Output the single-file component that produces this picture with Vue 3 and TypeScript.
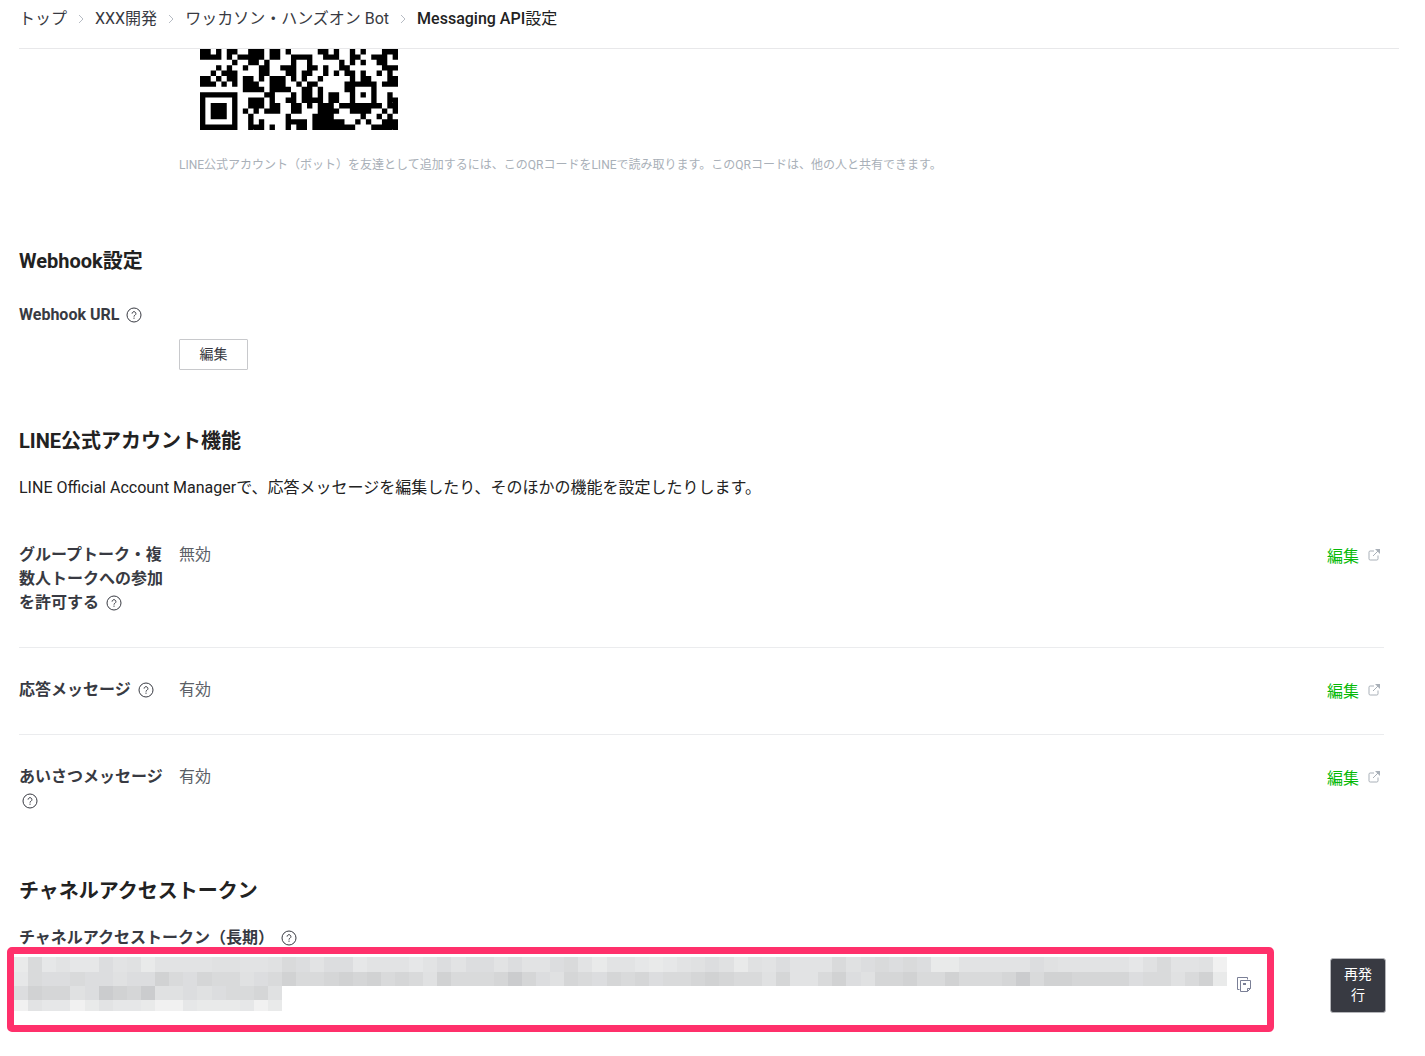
<script setup lang="ts">
import { defineComponent, h } from 'vue'

interface Feature {
  label: string
  value: string
}

const features: Feature[] = [
  { label: 'グループトーク・複数人トークへの参加を許可する', value: '無効' },
  { label: '応答メッセージ', value: '有効' },
  { label: 'あいさつメッセージ', value: '有効' },
]

const HelpIcon = defineComponent({
  render: () =>
    h('svg', { viewBox: '0 0 16 16', width: 16, height: 16, fill: 'none', stroke: '#383a42', role: 'img', 'aria-label': 'ヘルプ' }, [
      h('circle', { cx: 8, cy: 8, r: 7 }),
      h('path', { d: 'M6.1 6.6a1.9 1.9 0 1 1 2.9 1.6c-.7.4-1 .7-1 1.4' }),
      h('path', { d: 'M8 10.6v1.2' }),
    ]),
})

// Dark modules of each visible QR row, as column numbers
const qrRows: number[][] = [
  [0, 1, 3, 5, 6, 9, 10, 11, 13, 14, 16, 22, 23, 25, 28, 30, 34, 35, 36],
  [0, 1, 2, 3, 5, 7, 8, 9, 10, 11, 13, 14, 17, 18, 19, 20, 23, 24, 25, 28, 29, 32, 33, 34, 36],
  [6, 9, 10, 12, 17, 20, 26, 28, 30, 33, 34],
  [3, 5, 8, 11, 12, 15, 16, 17, 20, 21, 23, 26, 27, 34, 35, 36],
  [2, 4, 5, 6, 11, 12, 16, 17, 19, 20, 23, 25, 27, 28, 30, 33, 35],
  [0, 1, 3, 5, 6, 8, 9, 11, 13, 14, 15, 17, 19, 22, 28, 30, 31, 35, 36],
  [0, 1, 2, 4, 6, 8, 9, 10, 13, 14, 15, 18, 20, 21, 27, 28, 29, 30, 31, 32, 34, 35, 36],
  [8, 9, 10, 11, 13, 14, 15, 16, 19, 20, 22, 27, 28, 32],
  [12, 13, 17, 19, 20, 22, 24, 25, 28, 30, 32, 35],
  [9, 10, 11, 13, 16, 17, 19, 20, 21, 22, 24, 25, 28, 32, 35, 36],
  [9, 10, 11, 13, 14, 17, 18, 20, 22, 23, 24, 26, 27, 28, 29, 30, 31, 32, 33, 35, 36],
  [8, 10, 12, 13, 14, 17, 18, 22, 23, 24, 25, 28, 29, 30, 31, 34, 36],
  [9, 16, 21, 22, 23, 24, 30, 33, 35],
  [9, 11, 16, 17, 18, 19, 21, 22, 23, 24, 25, 26, 29, 31, 34, 35, 36],
  [9, 10, 11, 13, 16, 18, 19, 21, 22, 23, 24, 25, 26, 27, 28, 32, 33, 34, 35, 36],
]

// The finder pattern fills the lower left corner
const finderTop = 8
const finder: number[][] = [
  [0, 1, 2, 3, 4, 5, 6],
  [0, 6],
  [0, 2, 3, 4, 6],
  [0, 2, 3, 4, 6],
  [0, 2, 3, 4, 6],
  [0, 6],
  [0, 1, 2, 3, 4, 5, 6],
]
const qrPath = qrRows
  .map((cols, y) => [...(finder[y - finderTop] ?? []), ...cols].map((x) => `M${x} ${y}h1v1h-1z`).join(''))
  .join('')

const shades: Record<string, string> = {
  a: '#f1f1f1', b: '#e9eaea', c: '#e6e7e8', d: '#e2e3e4', e: '#e0e1e2',
  f: '#dcdddf', g: '#d9dadb', h: '#d5d6d7', i: '#d1d2d3', j: '#cbccce',
}
const mosaic: string[] = [
  'bgcdccfdebddddeeddegfd' + 'ffcdddcdfdffdfddfgdbddc' + 'bcdefebedfdddgefgfgfbbd' + 'ddddfedddddcegddea',
  'cgffgffeffigfhggefgigg' + 'hihighgeiggghjhfehgfhgh' + 'fgghihggehddgifehhiggig' + 'gghjgiihhhhfggegib',
  'fihhefjihjeefefgghe',
  'adccabdccbaacbbbcab',
].map((row) => row.padEnd(86, ' '))
</script>

<template>
  <div class="page">
    <header class="top">
      <nav class="crumbs" aria-label="パンくずリスト">
        <a href="#">トップ</a>
        <svg class="sep" viewBox="0 0 6 10" width="6" height="10"><path d="M1 1l4 4-4 4" /></svg>
        <a href="#">XXX開発</a>
        <svg class="sep" viewBox="0 0 6 10" width="6" height="10"><path d="M1 1l4 4-4 4" /></svg>
        <a href="#">ワッカソン・ハンズオン Bot</a>
        <svg class="sep" viewBox="0 0 6 10" width="6" height="10"><path d="M1 1l4 4-4 4" /></svg>
        <span class="current">Messaging API<span class="plain">設定</span></span>
      </nav>
    </header>

    <main class="content">
      <section class="qr-block">
        <svg class="qr" viewBox="0 0 37 15" width="198" height="81" preserveAspectRatio="none" role="img" aria-label="QRコード">
          <path :d="qrPath" />
        </svg>
        <p class="hint">LINE公式アカウント（ボット）を友達として追加するには、このQRコードをLINEで読み取ります。このQRコードは、他の人と共有できます。</p>
      </section>

      <section class="webhook">
        <h2>Webhook設定</h2>
        <h3>Webhook URL <HelpIcon class="help" /></h3>
        <button type="button" class="edit">編集</button>
      </section>

      <section class="features">
        <h2>LINE公式アカウント機能</h2>
        <p class="lead">LINE Official Account Managerで、応答メッセージを編集したり、そのほかの機能を設定したりします。</p>
        <div v-for="f in features" :key="f.label" class="feature">
          <h3>{{ f.label }} <HelpIcon class="help" /></h3>
          <span class="value">{{ f.value }}</span>
          <a href="#" class="link">
            <span class="link-text">編集</span>
            <svg viewBox="0 0 12 12" width="12" height="12" fill="none">
              <path d="M6 2H2.2Q1 2 1 3.2v6.6Q1 11 2.2 11h6.6Q10 11 10 9.8V6.5M5 7l5.500-5.500" />
              <path d="M7 0h5v5z" class="tip" />
            </svg>
          </a>
        </div>
      </section>

      <section class="token">
        <h2>チャネルアクセストークン</h2>
        <h3>チャネルアクセストークン（長期） <HelpIcon class="help" /></h3>
        <div class="token-row">
          <div class="token-box">
            <div class="mosaic" aria-hidden="true">
              <div v-for="(row, r) in mosaic" :key="r" class="mosaic-row">
                <i v-for="(cell, c) in row" :key="c" :style="{ background: shades[cell] }"></i>
              </div>
            </div>
            <button type="button" class="copy" aria-label="コピー">
              <svg viewBox="0 0 16 17" width="16" height="17" fill="none">
                <path d="M3.500 13.500H1.500V1.500h10v2" />
                <path d="M4.500 4.500h10v8l-3 3h-7zM14.500 12.500h-3v3" />
                <path d="M7 7.500h3M7 8.500h3" />
              </svg>
            </button>
          </div>
          <button type="button" class="reissue">再発行</button>
        </div>
      </section>
    </main>
  </div>
</template>

<style>
body {
  background: #fff;
}
</style>

<style scoped>
.page {
  font: 400 16px/24px Roboto, 'Noto Sans CJK JP', sans-serif;
  color: #383a42;
  padding: 0 26px 24px 19px;
}
h2,
h3,
p {
  margin: 0;
}
h2 {
  font-size: 20px;
  line-height: 28px;
  font-weight: 700;
  color: #222;
}
h3 {
  font-size: 16px;
  line-height: 24px;
  font-weight: 700;
}
button {
  font-family: inherit;
  padding: 0;
  cursor: pointer;
}
a {
  color: inherit;
  text-decoration: none;
}
.top {
  border-bottom: 1px solid #e8e8ea;
  padding: 7px 0 17px;
}
.content {
  padding-right: 15px;
}
.crumbs {
  display: flex;
  align-items: center;
  gap: 11px;
}
.sep {
  fill: none;
  stroke: #b7bcc4;
}
.current {
  font-weight: 500;
  color: #222;
}
.plain {
  font-weight: 400;
}
.help {
  margin-left: 3px;
  vertical-align: -3px;
}
.qr-block {
  padding-left: 160px;
}
.qr {
  display: block;
  margin-left: 21px;
}
.hint {
  margin-top: 25px;
  font-size: 12px;
  line-height: 20px;
  color: #a9b0b8;
}
.webhook {
  margin-top: 72px;
}
.webhook h3 {
  margin-top: 28px;
}
.edit {
  display: block;
  margin: 12px 0 0 160px;
  width: 69px;
  height: 31px;
  padding-bottom: 2px;
  border: 1px solid #c8c9cc;
  border-radius: 1px;
  background: #fff;
  color: #383a42;
  font-size: 14px;
  line-height: 20px;
}
.features {
  margin-top: 57px;
}
.lead {
  margin-top: 21px;
  color: #222;
}
.feature {
  display: flex;
  align-items: flex-start;
  padding: 30px 0 32px;
  border-bottom: 1px solid #ebecee;
}
.lead + .feature {
  padding-top: 43px;
}
.feature:last-child {
  border-bottom: 0;
  padding-bottom: 0;
}
.feature h3 {
  width: 145px;
  margin-right: 15px;
}
.value {
  flex: 1;
  color: #5b5f67;
}
.link {
  display: flex;
  gap: 9px;
  margin-bottom: -2px;
  padding-right: 4px;
}
.link-text {
  color: #06b906;
  padding-top: 2px;
}
.link svg {
  margin-top: 6px;
  stroke: #a9b0b8;
}
.link .tip {
  fill: #a9b0b8;
  stroke: none;
}
.token {
  margin-top: 64px;
}
.token h3 {
  margin-top: 21px;
}
.token-row {
  display: flex;
  align-items: flex-start;
  margin: -3px -2px 0 -12px;
}
.token-box {
  flex: 1;
  display: flex;
  align-items: flex-start;
  box-sizing: border-box;
  height: 85px;
  margin-right: 56px;
  padding: 3px 9px 0 0;
  border: 7px solid #ff306b;
  border-radius: 5px;
}
.mosaic {
  flex: 1;
}
.mosaic-row {
  display: flex;
  height: 14px;
}
.mosaic-row:first-child {
  height: 15px;
}
.mosaic-row:last-child {
  height: 11px;
}
.mosaic-row i {
  flex: 1;
}
.copy {
  display: block;
  margin: 19px 6px 0 9px;
  border: 0;
  background: none;
  line-height: 0;
}
.copy svg {
  stroke: #7a7f96;
}
.reissue {
  width: 56px;
  height: 55px;
  margin-top: 11px;
  padding: 0 13px 2px;
  border: 1px solid #b4b5b9;
  border-radius: 3px;
  background: #383a42;
  color: #fff;
  font-size: 14px;
  line-height: 21px;
}
</style>
